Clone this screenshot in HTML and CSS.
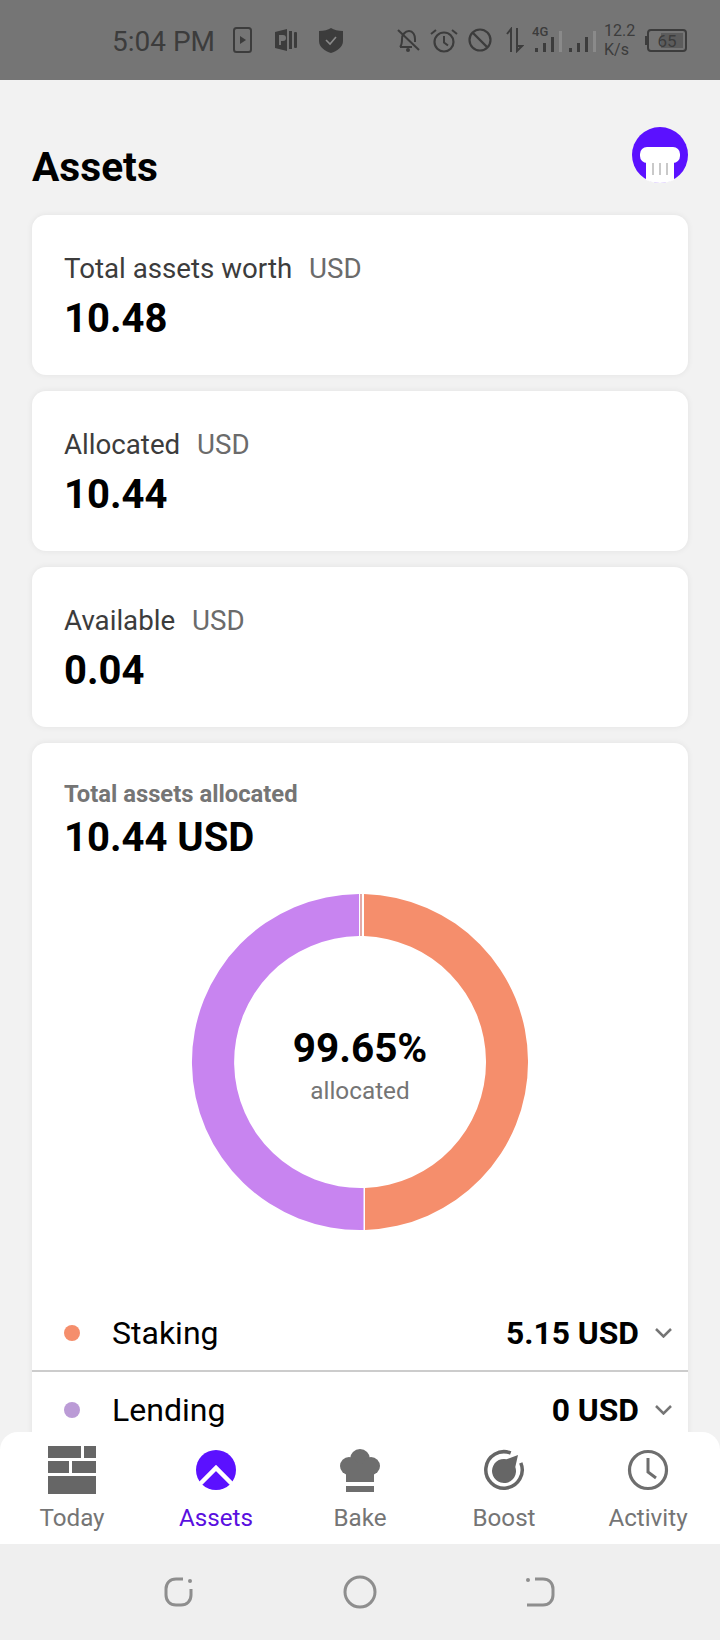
FILE: index.html
```html
<!DOCTYPE html>
<html>
<head>
<meta charset="utf-8">
<title>Assets</title>
<link rel="stylesheet" href="styles.css">
</head>
<body>
<div class="screen">
    <div class="status-bar">
        <span class="status-time">5:04 PM</span>
        <svg class="st-phone" width="19" height="26" viewBox="0 0 19 26"><rect x="1" y="1" width="17" height="24" rx="2.5" fill="none" stroke="#3c3c3c" stroke-width="2"/><path d="M7 9l6 4-6 4z" fill="#3c3c3c"/></svg>
        <svg class="st-p" width="24" height="24" viewBox="0 0 24 24"><path d="M0 4l12-3v22L0 20z" fill="#3c3c3c"/><path d="M4 7h4a2.5 2.5 0 0 1 0 6H6v4H4z" fill="#757575"/><rect x="14" y="3" width="3" height="18" fill="#3c3c3c"/><rect x="19" y="4" width="3" height="16" rx="1" fill="#3c3c3c"/></svg>
        <svg class="st-shield" width="24" height="25" viewBox="0 0 24 25"><path d="M12 0c3 2 7 3 12 3v10c0 6-6 10-12 12C6 23 0 19 0 13V3c5 0 9-1 12-3z" fill="#3c3c3c"/><path d="M7 12l4 4 6-7" fill="none" stroke="#8a8a8a" stroke-width="1.6"/></svg>
        <svg class="st-bell" width="23" height="24" viewBox="0 0 23 24"><path d="M3 19c2-2 2-4 2-8 0-4 3-8 7-8s6 4 6 8v3M3 19h12" fill="none" stroke="#3c3c3c" stroke-width="2"/><path d="M1 2l21 20" stroke="#3c3c3c" stroke-width="2"/><circle cx="11" cy="22" r="2" fill="#3c3c3c"/></svg>
        <svg class="st-alarm" width="28" height="25" viewBox="0 0 28 25"><circle cx="14" cy="14" r="9.5" fill="none" stroke="#3c3c3c" stroke-width="2.2"/><path d="M14 8v6.5l4 3M1 6l5-4M27 6l-5-4" fill="none" stroke="#3c3c3c" stroke-width="2"/></svg>
        <svg class="st-block" width="24" height="24" viewBox="0 0 24 24"><circle cx="12" cy="12" r="10.5" fill="none" stroke="#3c3c3c" stroke-width="2.2"/><path d="M5 5l14 14" stroke="#3c3c3c" stroke-width="2.4"/></svg>
        <svg class="st-arrows" width="18" height="26" viewBox="0 0 18 26"><path d="M5 25V2L1 7M11 1v23l5-5h-5" fill="none" stroke="#3c3c3c" stroke-width="2"/></svg>
        <svg class="st-signal" width="66" height="30" viewBox="0 0 66 30"><text x="0" y="11" class="st-4g">4G</text><rect x="3" y="23" width="3" height="4" fill="#3c3c3c"/><rect x="11" y="18" width="3" height="9" fill="#3c3c3c"/><rect x="19" y="12" width="3" height="15" fill="#3c3c3c"/><rect x="27" y="6" width="3" height="21" fill="#8a8a8a"/><rect x="37" y="23" width="3" height="4" fill="#3c3c3c"/><rect x="45" y="18" width="3" height="9" fill="#3c3c3c"/><rect x="53" y="12" width="3" height="15" fill="#3c3c3c"/><rect x="61" y="6" width="3" height="21" fill="#8a8a8a"/></svg>
        <div class="st-speed"><span>12.2</span><span>K/s</span></div>
        <svg class="st-battery" width="42" height="24" viewBox="0 0 42 24"><rect x="0" y="8" width="2" height="9" fill="#3c3c3c"/><rect x="3" y="2" width="38" height="21" rx="3" fill="none" stroke="#3c3c3c" stroke-width="2"/><rect x="16" y="5" width="22" height="15" fill="#5c5c5c"/><text x="22" y="18.500" text-anchor="middle" class="st-batt-text">65</text></svg>
    </div>

    <div class="content">
        <div class="page-head">
            <h1 class="page-title">Assets</h1>
            <svg class="avatar" width="56" height="56" viewBox="0 0 56 56">
                <circle cx="28" cy="28" r="28" fill="#5b11ff"/>
                <rect x="8" y="20" width="40" height="16" rx="7" fill="#fff"/>
                <path d="M14 30h28v23c-4 2-9 3-14 3s-10-1-14-3z" fill="#fff"/>
                <path d="M21 36v12M28 36v12M35 36v12" stroke="#c9c9c9" stroke-width="2"/>
            </svg>
        </div>

        <div class="card stat-card">
            <div class="stat-label">Total assets worth <span class="stat-unit">USD</span></div>
            <div class="stat-value">10.48</div>
        </div>
        <div class="card stat-card">
            <div class="stat-label">Allocated <span class="stat-unit">USD</span></div>
            <div class="stat-value">10.44</div>
        </div>
        <div class="card stat-card">
            <div class="stat-label">Available <span class="stat-unit">USD</span></div>
            <div class="stat-value">0.04</div>
        </div>

        <div class="card alloc-card">
            <div class="alloc-head">
                <div class="alloc-title">Total assets allocated</div>
                <div class="alloc-total">10.44 USD</div>
            </div>
            <div class="donut">
                <svg width="340" height="340" viewBox="0 0 340 340">
                    <path d="M174 2.05A168 168 0 0 1 175 337.93V295.9A126 126 0 0 0 174 44.060Z" fill="#f58e6c"/>
                    <path d="M173.500 337.960A168 168 0 1 1 169 2V44A126 126 0 1 0 173.500 295.950Z" fill="#c884f0"/>
                    <rect x="170" y="2" width="2" height="42" fill="#e4a9a6"/>
                </svg>
                <div class="donut-center">
                    <div class="donut-pct">99.65%</div>
                    <div class="donut-sub">allocated</div>
                </div>
            </div>
            <div class="legend-row">
                <span class="legend-dot dot-staking"></span>
                <span class="legend-name">Staking</span>
                <span class="legend-value">5.15 USD</span>
                <svg class="legend-arrow" width="17" height="10" viewBox="0 0 17 10"><path d="M1 1l7.500 7.500L16 1" fill="none" stroke="#757575" stroke-width="2.500"/></svg>
            </div>
            <div class="legend-row">
                <span class="legend-dot dot-lending"></span>
                <span class="legend-name">Lending</span>
                <span class="legend-value">0 USD</span>
                <svg class="legend-arrow" width="17" height="10" viewBox="0 0 17 10"><path d="M1 1l7.500 7.500L16 1" fill="none" stroke="#757575" stroke-width="2.500"/></svg>
            </div>
        </div>
    </div>

    <div class="tab-bar">
        <div class="tab">
            <svg width="48" height="48" viewBox="0 0 48 48"><path d="M0 0h33v12H0zM36 0h12v12H36zM0 15h21v12H0zM24 15h24v12H24zM0 30h48v18H0z" fill="#666"/></svg>
            <span>Today</span>
        </div>
        <div class="tab tab-active">
            <svg width="48" height="48" viewBox="0 0 48 48"><circle cx="24" cy="24" r="20" fill="#5b11ff"/><path d="M8 38l16-16 16 16" fill="none" stroke="#fff" stroke-width="4.500"/></svg>
            <span>Assets</span>
        </div>
        <div class="tab">
            <svg width="48" height="48" viewBox="0 0 48 48"><g fill="#6e6e6e"><circle cx="24" cy="13" r="10"/><circle cx="13" cy="20" r="9"/><circle cx="35" cy="20" r="9"/><rect x="10" y="18" width="28" height="18"/><rect x="10" y="40" width="28" height="6"/></g></svg>
            <span>Bake</span>
        </div>
        <div class="tab">
            <svg width="48" height="48" viewBox="0 0 48 48"><path d="M30.700 7A18.200 18.200 0 1 0 40.800 16.900" fill="none" stroke="#666" stroke-width="3.500"/><path d="M38 9L35.300 21A12 12 0 1 1 26.500 13.300Z" fill="#666"/></svg>
            <span>Boost</span>
        </div>
        <div class="tab">
            <svg width="48" height="48" viewBox="0 0 48 48"><circle cx="24" cy="24" r="18.500" fill="none" stroke="#6e6e6e" stroke-width="3.200"/><path d="M24 12v14l8 6" fill="none" stroke="#6e6e6e" stroke-width="3"/></svg>
            <span>Activity</span>
        </div>
    </div>

    <div class="nav-bar">
        <svg width="34" height="32" viewBox="0 0 34 32"><path d="M20 3h-7C7 3 3 7 3 13v6c0 6 4 10 10 10h5c6 0 10-4 10-10v-6" fill="none" stroke="#8e8e8e" stroke-width="3"/><circle cx="27" cy="5" r="2" fill="#8e8e8e"/></svg>
        <svg width="34" height="34" viewBox="0 0 34 34"><circle cx="17" cy="17" r="15" fill="none" stroke="#8e8e8e" stroke-width="3"/></svg>
        <svg width="34" height="32" viewBox="0 0 34 32"><path d="M12 3h8c6 0 10 4 10 10v6c0 6-4 10-10 10H4" fill="none" stroke="#8e8e8e" stroke-width="3"/><circle cx="5" cy="4" r="2" fill="#8e8e8e"/></svg>
    </div>
</div>
</body>
</html>
```
FILE: styles.css
```css
* {
  box-sizing: border-box;
}
html, body {
  margin: 0;
  padding: 0;
}
body {
  font-family: Roboto, "Liberation Sans", sans-serif;
  background: #f2f2f2;
  color: #000;
}
.screen {
  display: flex;
  flex-direction: column;
  width: 720px;
  height: 1640px;
  overflow: hidden;
}

/* status bar */
.status-bar {
  display: flex;
  align-items: center;
  flex: none;
  height: 80px;
  padding-left: 112px;
  background: #757575;
  color: #3c3c3c;
}
.status-time {
  width: 103px;
  padding-top: 2px;
  font-size: 28px;
  white-space: nowrap;
}
.st-phone { margin-left: 18px; }
.st-p { margin-left: 23px; }
.st-shield { margin-left: 20px; }
.st-bell { margin-left: 54px; }
.st-alarm { margin-left: 10px; }
.st-block { margin-left: 10px; }
.st-arrows { margin-left: 14px; }
.st-signal { margin-left: 8px; }
.st-4g {
  font-size: 13px;
  font-weight: 500;
  fill: #3c3c3c;
}
.st-speed {
  display: flex;
  flex-direction: column;
  width: 31px;
  margin-left: 6px;
  font-size: 16px;
  line-height: 19px;
}
.st-battery { margin-left: 10px; }
.st-batt-text {
  font-size: 17px;
  fill: #3c3c3c;
}

/* page */
.content {
  flex: 1;
  min-height: 0;
  padding: 47px 32px 0;
}
.page-head {
  display: flex;
  justify-content: space-between;
  align-items: flex-start;
  height: 88px;
}
.page-title {
  margin: 18px 0 0;
  font-size: 40.700px;
  line-height: 44px;
  font-weight: 700;
}
.card {
  margin-bottom: 16px;
  background: #fff;
  border-radius: 14px;
  box-shadow: 0 0 6px rgba(0, 0, 0, .07);
}
.stat-card {
  height: 160px;
  padding: 38px 32px 0;
}
.stat-label {
  font-size: 27.7px;
  line-height: 32px;
  color: #3c3c3c;
}
.stat-unit {
  margin-left: 10px;
  color: #6b6b6b;
}
.stat-value {
  margin-top: 12px;
  font-size: 40px;
  line-height: 44px;
  font-weight: 700;
}

/* allocation card */
.alloc-card {
  height: 800px;
}
.alloc-head {
  padding: 37px 32px 0;
}
.alloc-title {
  font-size: 23.8px;
  line-height: 28px;
  font-weight: 700;
  color: #757575;
}
.alloc-total {
  margin-top: 8px;
  font-size: 40px;
  line-height: 44px;
  font-weight: 700;
}
.donut {
  position: relative;
  display: flex;
  justify-content: center;
  margin-top: 32px;
}
.donut-center {
  position: absolute;
  top: 134px;
  left: 0;
  right: 0;
  text-align: center;
}
.donut-pct {
  font-size: 40.5px;
  line-height: 44px;
  font-weight: 700;
}
.donut-sub {
  margin-top: 6px;
  font-size: 24.3px;
  line-height: 30px;
  color: #757575;
}
.legend-row {
  display: flex;
  align-items: center;
  height: 76px;
  padding: 0 16px 0 32px;
  border-bottom: 2px solid #ccc;
}
.legend-row:last-child {
  border-bottom: 0;
}
.donut + .legend-row {
  margin-top: 64px;
}
.legend-dot {
  width: 16px;
  height: 16px;
  border-radius: 50%;
}
.dot-staking { background: #f58e6c; }
.dot-lending { background: #bb9bd6; }
.legend-name {
  flex: 1;
  margin-left: 32px;
  font-size: 32px;
}
.legend-value {
  font-size: 31.8px;
  font-weight: 700;
}
.legend-arrow {
  margin-left: 16px;
}

/* bottom tabs */
.tab-bar {
  position: relative;
  display: grid;
  grid-template-columns: repeat(5, 144px);
  flex: none;
  height: 112px;
  padding-top: 14px;
  background: #fff;
  border-radius: 18px 18px 0 0;
}
.tab {
  display: flex;
  flex-direction: column;
  align-items: center;
  font-size: 24.2px;
  line-height: 28px;
  color: #757575;
}
.tab-active {
  color: #5a0fe0;
}
.tab span {
  margin-top: 10px;
}

/* system nav */
.nav-bar {
  display: flex;
  justify-content: space-between;
  align-items: center;
  flex: none;
  height: 96px;
  padding: 0 163px;
  background: #efefef;
}
```
